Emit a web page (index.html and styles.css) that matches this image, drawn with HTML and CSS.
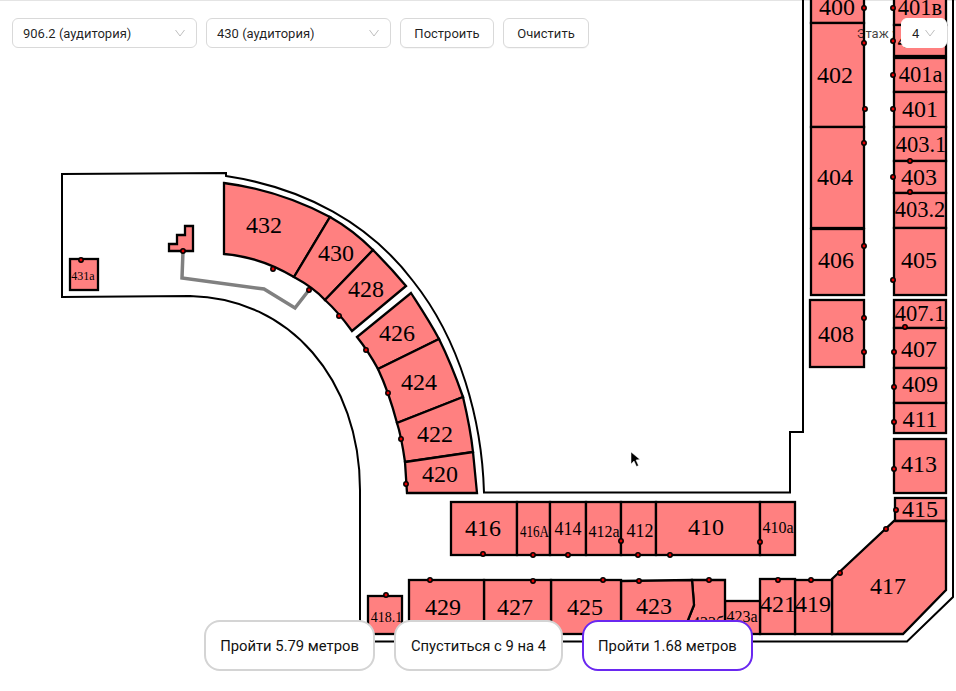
FILE: index.html
```html
<!DOCTYPE html>
<html lang="ru">
<head>
<meta charset="utf-8">
<title>Навигация</title>
<link rel="stylesheet" href="styles.css">
</head>
<body>
<div class="app">
  <svg class="map" viewBox="0 0 956 691" width="956" height="691">
    <g class="walls">
      <path d="M803 0V432H790V492.500H484C482 420 460 340 413 281C370 224 305 188 226 176V173L62 174V297L190 296C290 298 360 380 360 490V641.500H907L953 597V0"/>
    </g>
    <g class="rooms">
      <rect x="811" y="-2" width="53" height="25"/>
      <rect x="811" y="23" width="53" height="104"/>
      <rect x="811" y="127" width="53" height="101"/>
      <rect x="811" y="229" width="53" height="66"/>
      <rect x="810" y="300" width="54" height="67"/>
      <rect x="894" y="-2" width="52" height="27"/>
      <rect x="894" y="25" width="52" height="31"/>
      <rect x="894" y="58" width="52" height="34"/>
      <rect x="894" y="92" width="52" height="35"/>
      <rect x="894" y="127" width="52" height="34"/>
      <rect x="894" y="161" width="52" height="32"/>
      <rect x="894" y="193" width="52" height="35"/>
      <rect x="894" y="228" width="52" height="67"/>
      <rect x="894" y="300" width="52" height="28"/>
      <rect x="894" y="328" width="52" height="40"/>
      <rect x="894" y="368" width="52" height="35"/>
      <rect x="894" y="403" width="52" height="30"/>
      <rect x="894" y="439" width="52" height="54"/>
      <rect x="895" y="498" width="51" height="23"/>
      <path d="M894 521H946V590L903 634H832V579Z"/>
      <rect x="795" y="580" width="37" height="54"/>
      <rect x="760" y="579" width="35" height="55"/>
      <rect x="725" y="601" width="35" height="33"/>
      <path d="M692 580H725V634H686L688 620L694 605Z"/>
      <path d="M621 581L692 580L694 605L688 620L686 634H621Z"/>
      <rect x="551" y="580" width="70" height="54"/>
      <rect x="484" y="580" width="67" height="54"/>
      <rect x="409" y="580" width="75" height="54"/>
      <rect x="368" y="596" width="34" height="38"/>
      <rect x="451" y="502" width="66" height="53"/>
      <rect x="517" y="502" width="33" height="53"/>
      <rect x="550" y="502" width="36" height="53"/>
      <rect x="586" y="502" width="35" height="53"/>
      <rect x="621" y="502" width="35" height="53"/>
      <rect x="656" y="502" width="104" height="53"/>
      <rect x="760" y="502" width="35" height="53"/>
      <path d="M224 183C262 188 298 200 330 217L294 277C272 264 250 256 224 254Z"/>
      <path d="M330 217C346 226 360 237 373 250L325 300C316 290 305 283 294 277Z"/>
      <path d="M373 250C385 262 396 274 406 286L352 331C344 320 335 309 325 300Z"/>
      <path d="M411 293C420 307 430 322 439 339L378 369C372 358 365 347 357 337Z"/>
      <path d="M439 339C448 357 456 377 463 397L397 423C392 404 386 386 378 369Z"/>
      <path d="M463 397C467 414 471 433 473 452L405 462C403 448 401 435 397 423Z"/>
      <path d="M473 452L477 493H407L405 462Z"/>
      <rect x="70" y="259" width="28" height="31"/>
      <path d="M169 244H177V235H185V226H193V251H169Z"/>
    </g>
    <path class="route" d="M183 251L182 278L264 289L295 308L309 290"/>
    <g class="labels">
      <text x="837" y="15">400</text>
      <text x="835" y="83">402</text>
      <text x="835" y="185">404</text>
      <text x="836" y="268">406</text>
      <text x="836" y="342">408</text>
      <text class="lead" x="920" y="15">401в</text>
      <text class="lead" x="920" y="48">401б</text>
      <text class="lead" x="920.500" y="82">401а</text>
      <text x="920" y="117">401</text>
      <text class="lead" x="921" y="152">403.1</text>
      <text x="919" y="185">403</text>
      <text class="lead" x="920" y="217">403.2</text>
      <text x="919" y="268">405</text>
      <text class="lead" x="920" y="321">407.1</text>
      <text x="919" y="357">407</text>
      <text x="920" y="392">409</text>
      <text x="920" y="427">411</text>
      <text x="919" y="472">413</text>
      <text x="920" y="517">415</text>
      <text x="888" y="594">417</text>
      <text x="813" y="612">419</text>
      <text x="778" y="612">421</text>
      <text x="654" y="614">423</text>
      <text x="585" y="615">425</text>
      <text x="515" y="615">427</text>
      <text x="443" y="615">429</text>
      <text x="483" y="536">416</text>
      <text x="706" y="535">410</text>
      <text x="264" y="233">432</text>
      <text x="336" y="261">430</text>
      <text x="366" y="297">428</text>
      <text x="397" y="341">426</text>
      <text x="419" y="390">424</text>
      <text x="435" y="442">422</text>
      <text x="440" y="482">420</text>
      <text class="mid" x="568" y="535">414</text>
      <text class="mid" x="640" y="537">412</text>
      <text class="small" x="604" y="537">412а</text>
      <text class="small" x="778" y="533">410а</text>
      <text class="small" x="742" y="622">423а</text>
      <text class="small" x="708" y="628">423б</text>
      <text class="small" x="534.500" y="537" textLength="29" lengthAdjust="spacingAndGlyphs">416А</text>
      <text class="tiny" x="386.500" y="622">418.1</text>
      <text class="micro" x="83" y="280">431а</text>
    </g>
    <g class="dots">
      <circle cx="864" cy="8" r="2.200"/><circle cx="864" cy="43" r="2.200"/><circle cx="865" cy="109" r="2.200"/><circle cx="864" cy="143" r="2.200"/>
      <circle cx="893" cy="8" r="2.200"/><circle cx="893" cy="41" r="2.200"/><circle cx="893" cy="75" r="2.200"/><circle cx="893" cy="109" r="2.200"/>
      <circle cx="910" cy="161" r="2.200"/><circle cx="893" cy="177" r="2.200"/><circle cx="910" cy="192" r="2.200"/>
      <circle cx="864" cy="246" r="2.200"/><circle cx="893" cy="280" r="2.200"/><circle cx="864" cy="318" r="2.200"/><circle cx="905" cy="327" r="2.200"/>
      <circle cx="864" cy="352" r="2.200"/><circle cx="894" cy="352" r="2.200"/><circle cx="894" cy="387" r="2.200"/><circle cx="894" cy="422" r="2.200"/>
      <circle cx="894" cy="469" r="2.200"/><circle cx="896" cy="510" r="2.200"/><circle cx="886" cy="529" r="2.200"/><circle cx="840" cy="573" r="2.200"/>
      <circle cx="811" cy="580" r="2.200"/><circle cx="778" cy="580" r="2.200"/><circle cx="709" cy="580" r="2.200"/><circle cx="639" cy="581" r="2.200"/>
      <circle cx="603" cy="580" r="2.200"/><circle cx="533" cy="581" r="2.200"/><circle cx="430" cy="580" r="2.200"/><circle cx="386" cy="595" r="2.200"/>
      <circle cx="81" cy="260" r="2.200"/><circle cx="183" cy="251" r="2.200"/><circle cx="273" cy="269" r="2.200"/><circle cx="309" cy="290" r="2.200"/>
      <circle cx="339" cy="316" r="2.200"/><circle cx="366" cy="350" r="2.200"/><circle cx="388" cy="393" r="2.200"/><circle cx="401" cy="439" r="2.200"/><circle cx="406" cy="484" r="2.200"/>
      <circle cx="483" cy="554" r="2.200"/><circle cx="533" cy="555" r="2.200"/><circle cx="568" cy="555" r="2.200"/><circle cx="621" cy="541" r="2.200"/>
      <circle cx="638" cy="555" r="2.200"/><circle cx="670" cy="555" r="2.200"/><circle cx="760" cy="542" r="2.200"/>
    </g>
    <path class="cursor" d="M631 452V464L634 461L636.500 466.500L638.500 465.500L636 460L640 459.500Z"/>
  </svg>

  <div class="toolbar">
    <div class="select select-wide">
      <span>906.2 (аудитория)</span>
      <svg class="chevron" viewBox="0 0 10 8" width="10" height="8"><path d="M0.500 1L5 7L9.500 1"/></svg>
    </div>
    <div class="select select-wide">
      <span>430 (аудитория)</span>
      <svg class="chevron" viewBox="0 0 10 8" width="10" height="8"><path d="M0.500 1L5 7L9.500 1"/></svg>
    </div>
    <button class="btn btn-build" type="button">Построить</button>
    <button class="btn btn-clear" type="button">Очистить</button>
    <div class="floor">
      <span class="floor-label">Этаж :</span>
      <div class="select select-floor">
        <span>4</span>
        <svg class="chevron" viewBox="0 0 10 8" width="10" height="8"><path d="M0.500 1L5 7L9.500 1"/></svg>
      </div>
    </div>
  </div>

  <div class="steps">
    <div class="step">Пройти 5.79 метров</div>
    <div class="step">Спуститься с 9 на 4</div>
    <div class="step step-active">Пройти 1.68 метров</div>
  </div>
</div>
</body>
</html>
```
FILE: styles.css
```css
* {
  box-sizing: border-box;
}

html,
body {
  margin: 0;
  padding: 0;
  background: #fff;
}

.app {
  position: relative;
  width: 956px;
  height: 691px;
  overflow: hidden;
  font-family: Roboto, "Noto Sans", sans-serif;
  font-size: 13px;
  color: rgba(0, 0, 0, 0.88);
  background: #fff;
}

.app::before {
  content: "";
  position: absolute;
  inset: 0 0 auto 0;
  height: 1px;
  background: #e4e4e4;
}

.map {
  position: absolute;
  inset: 0;
  display: block;
}

.walls path {
  fill: none;
  stroke: #000;
  stroke-width: 2;
}

.rooms rect,
.rooms path {
  fill: #ff8080;
  stroke: #000;
  stroke-width: 2.300;
}

.route {
  fill: none;
  stroke: #808080;
  stroke-width: 3.500;
}

.labels text {
  font-family: "Liberation Serif", serif;
  font-size: 24px;
  fill: #000;
  text-anchor: middle;
}

.labels .lead {
  font-size: 22.500px;
}

.labels .mid {
  font-size: 18px;
}

.labels .small {
  font-size: 16px;
}

.labels .tiny {
  font-size: 14px;
}

.labels .micro {
  font-size: 12px;
}

.dots circle {
  fill: #e00000;
  stroke: #000;
  stroke-width: 1.500;
}

.cursor {
  fill: #000;
  stroke: #fff;
  stroke-width: 0.500;
}

.toolbar {
  position: absolute;
  top: 18px;
  left: 12px;
  right: 9px;
  display: flex;
  align-items: center;
  gap: 9px;
}

.select {
  display: flex;
  align-items: center;
  justify-content: space-between;
  height: 30px;
  padding: 0 11px 0 10px;
  background: #fff;
  border: 1px solid #d9d9d9;
  border-radius: 6px;
}

.select-wide {
  width: 185px;
}

.chevron {
  flex: none;
}

.chevron path {
  fill: none;
  stroke: #bfbfbf;
  stroke-width: 1;
}

.btn {
  height: 30px;
  padding: 0;
  font: inherit;
  color: inherit;
  background: #fff;
  border: 1px solid #d9d9d9;
  border-radius: 6px;
  box-shadow: 0 1px 0 rgba(0, 0, 0, 0.03);
}

.btn-build {
  width: 94px;
}

.btn-clear {
  width: 86px;
}

.floor {
  display: flex;
  align-items: center;
  gap: 6px;
  margin-left: auto;
}

.floor-label {
  color: rgba(0, 0, 0, 0.75);
  white-space: nowrap;
}

.select-floor {
  width: 46px;
  border-color: #fff;
}

.steps {
  position: absolute;
  left: 1px;
  right: 0;
  bottom: 20px;
  display: flex;
  justify-content: center;
  gap: 19px;
}

.step {
  display: flex;
  align-items: center;
  height: 51px;
  padding: 0 14.500px;
  font-size: 14.800px;
  white-space: nowrap;
  color: #111;
  background: #fff;
  border: 2px solid #d4d4d4;
  border-radius: 16px;
}

.step-active {
  border-color: #6a28f0;
}
```
